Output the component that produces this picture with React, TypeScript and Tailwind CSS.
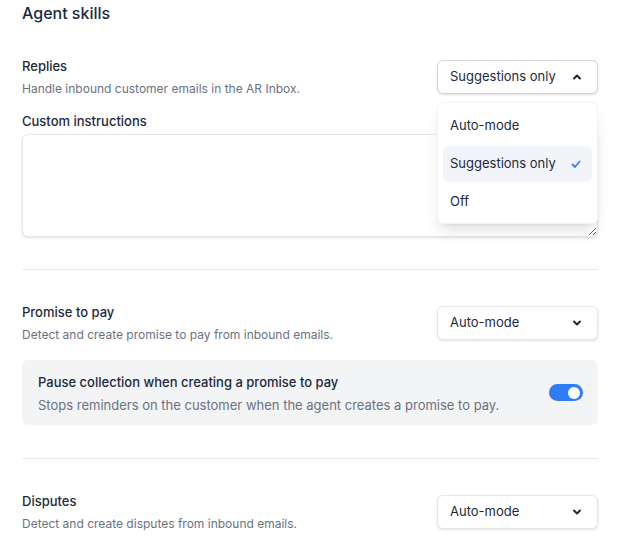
import { useState, type ReactNode } from "react";

const font = { fontFamily: "Inter, 'Noto Sans', sans-serif" };

function ChevronIcon({ up = false }: { up?: boolean }) {
  return (
    <svg viewBox="0 0 16 16" className="h-4 w-4 text-slate-800" fill="none" stroke="currentColor" strokeWidth={2} strokeLinecap="round" strokeLinejoin="round">
      {up ? <path d="M5 9.5 8 6.5l3 3" /> : <path d="M5 6.5 8 9.5l3-3" />}
    </svg>
  );
}

function CheckIcon() {
  return (
    <svg viewBox="0 0 16 16" className="h-4 w-4 text-[#3b82f6]" fill="none" stroke="currentColor" strokeWidth={1.8} strokeLinecap="round" strokeLinejoin="round">
      <path d="M4.5 8.5 7 11l4.5-5.5" />
    </svg>
  );
}

function SkillSelect({ value, open = false, options = [] }: { value: string; open?: boolean; options?: string[] }) {
  return (
    <div className="relative w-[161px] shrink-0">
      <button
        type="button"
        className={
          open
            ? "flex h-[34px] w-full items-center justify-between rounded-md border border-gray-300 bg-white pl-3 pr-3 text-[13px] text-slate-800 shadow-sm"
            : "flex h-[34px] w-full items-center justify-between rounded-md border border-gray-200 bg-white pl-3 pr-3 text-[13px] text-slate-800 shadow-sm"
        }
      >
        <span>{value}</span>
        <ChevronIcon up={open} />
      </button>
      {open ? (
        <div className="absolute left-0 top-[42px] z-10 flex w-[161px] flex-col gap-[2px] rounded-md border border-gray-100 bg-white p-[5px] pb-[3px] shadow-lg">
          {options.map((option) => (
            <div
              key={option}
              className={
                option === value
                  ? "flex h-9 items-center justify-between rounded-md bg-slate-100 pl-[7px] pr-2 text-[13px] text-slate-800"
                  : "flex h-9 items-center justify-between rounded-md pl-[7px] pr-2 text-[13px] text-slate-800"
              }
            >
              <span>{option}</span>
              {option === value ? <CheckIcon /> : null}
            </div>
          ))}
        </div>
      ) : null}
    </div>
  );
}

function SkillHeader({ title, description, action }: { title: string; description: string; action: ReactNode }) {
  return (
    <div className="flex items-center justify-between gap-4">
      <div>
        <p className="text-[13px] leading-5 font-medium text-slate-800">{title}</p>
        <p className="mt-[5px] text-[12px] leading-4 text-gray-500">{description}</p>
      </div>
      {action}
    </div>
  );
}

function Toggle({ checked }: { checked: boolean }) {
  return (
    <span
      className={
        checked
          ? "flex h-[17px] w-[34px] items-center justify-end rounded-full bg-[#2f7cf6] px-[3px]"
          : "flex h-[17px] w-[34px] items-center justify-start rounded-full bg-gray-300 px-[3px]"
      }
    >
      <span className="h-[12px] w-[12px] rounded-full bg-white" />
    </span>
  );
}

export default function App() {
  const [instructions, setInstructions] = useState("");

  return (
    <div className="min-h-[550px] bg-white pl-[22px] pr-8 text-slate-800" style={font}>
      <h2 className="pt-[1px] text-[16px] leading-6 font-medium text-slate-800">Agent skills</h2>

      <section className="border-b border-gray-200 pt-[31px] pb-8">
        <SkillHeader
          title="Replies"
          description="Handle inbound customer emails in the AR Inbox."
          action={<SkillSelect value="Suggestions only" open options={["Auto-mode", "Suggestions only", "Off"]} />}
        />
        <label className="mt-[14px] block text-[13px] leading-5 font-medium text-slate-800">Custom instructions</label>
        <textarea
          value={instructions}
          onChange={(event) => setInstructions(event.currentTarget.value)}
          className="mt-[3px] block h-[103px] w-full rounded-md border border-gray-200 bg-white shadow-sm outline-none"
        />
      </section>

      <section className="border-b border-gray-200 pt-8 pb-[33px]">
        <SkillHeader
          title="Promise to pay"
          description="Detect and create promise to pay from inbound emails."
          action={<SkillSelect value="Auto-mode" />}
        />
        <div className="mt-[17px] flex items-center justify-between rounded-md bg-[#f3f4f6] py-3 pl-4 pr-[15px]">
          <div>
            <p className="text-[13px] leading-5 font-medium text-slate-800">Pause collection when creating a promise to pay</p>
            <p className="mt-[5px] text-[13px] leading-4 text-gray-500">
              Stops reminders on the customer when the agent creates a promise to pay.
            </p>
          </div>
          <Toggle checked />
        </div>
      </section>

      <section className="pt-8 pb-8">
        <SkillHeader
          title="Disputes"
          description="Detect and create disputes from inbound emails."
          action={<SkillSelect value="Auto-mode" />}
        />
      </section>
    </div>
  );
}
